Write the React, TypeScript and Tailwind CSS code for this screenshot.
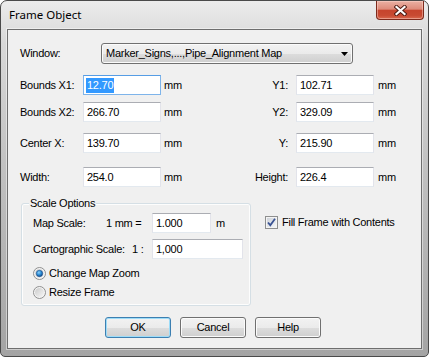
import type { ReactNode } from "react";

const btnGradient =
  "bg-[linear-gradient(to_bottom,#f2f2f2_0%,#ebebeb_50%,#dddddd_51%,#cfcfcf_100%)]";

function Field({
  value,
  width,
  focused = false,
  selected = false,
}: {
  value: string;
  width: string;
  focused?: boolean;
  selected?: boolean;
}) {
  return (
    <div
      className={`flex h-[20px] items-center border bg-white pl-[2px] ${width} ${
        focused
          ? "border-[#7eb4ea] border-t-[#569de5]"
          : "border-[#e2e3ea] border-t-[#abadb3] border-b-[#e3e9ef]"
      }`}
    >
      {selected ? (
        <span className="bg-[#3399ff] px-[1px] leading-[15px] text-white">{value}</span>
      ) : (
        <span className="pl-[1px]">{value}</span>
      )}
    </div>
  );
}

function CoordRow({
  left,
  leftValue,
  right,
  rightValue,
  focused = false,
  className = "",
}: {
  left: string;
  leftValue: string;
  right: string;
  rightValue: string;
  focused?: boolean;
  className?: string;
}) {
  return (
    <div className={`flex h-[20px] items-center pl-[12px] ${className}`}>
      <span className="w-[63px]">{left}</span>
      <Field value={leftValue} width="w-[78px]" focused={focused} selected={focused} />
      <div className="flex w-[135px] items-center justify-between pl-[3px] pr-[8px]">
        <span>mm</span>
        <span>{right}</span>
      </div>
      <Field value={rightValue} width="w-[78px]" />
      <span className="ml-[4px]">mm</span>
    </div>
  );
}

function Radio({ checked, children }: { checked?: boolean; children: ReactNode }) {
  return (
    <div className="flex h-[17px] items-center gap-[3px] pl-[11px]">
      <svg width="13" height="13" viewBox="0 0 13 13">
        <defs>
          <linearGradient id={checked ? "rg1" : "rg2"} x1="0" y1="0" x2="1" y2="1">
            <stop offset="0" stopColor="#cbcbcb" />
            <stop offset="1" stopColor="#f6f6f6" />
          </linearGradient>
          <radialGradient id="rdot" cx="0.4" cy="0.35" r="0.7">
            <stop offset="0" stopColor="#8fd0f8" />
            <stop offset="0.5" stopColor="#2c8fd8" />
            <stop offset="1" stopColor="#10407e" />
          </radialGradient>
        </defs>
        <circle cx="6.5" cy="6.5" r="6" fill="#f4f4f4" stroke="#8f8f8f" />
        <circle cx="6.5" cy="6.5" r="4.5" fill={`url(#${checked ? "rg1" : "rg2"})`} />
        {checked && <circle cx="6.5" cy="6.5" r="3.2" fill="url(#rdot)" stroke="#1c4f8c" strokeWidth="0.6" />}
      </svg>
      <span>{children}</span>
    </div>
  );
}

function Button({ children, focused = false }: { children: ReactNode; focused?: boolean }) {
  return (
    <button
      className={`flex h-[21px] w-[66px] items-center justify-center rounded-[3px] border ${btnGradient} ${
        focused
          ? "border-[#3c7fb1] shadow-[inset_0_0_0_1px_#9ddcf8]"
          : "border-[#707070] shadow-[inset_0_0_0_1px_#fbfbfb]"
      }`}
    >
      {children}
    </button>
  );
}

export default function App() {
  return (
    <div className="h-[357px] w-[429px] bg-white font-['Liberation_Sans',Arial,sans-serif] text-[11px] tracking-[-0.25px] text-black">
      <div className="flex h-[357px] w-[429px] flex-col rounded-t-[7px] rounded-b-[5px] border border-[#4a4a4a] bg-[linear-gradient(to_bottom,#ececec_0%,#d8d8d8_12%,#c2c2c2_45%,#a4a4a4_100%)]">
        <div className="flex h-[28px] items-start justify-between">
          <span className="pl-[8px] pt-[6px] font-['Noto_Sans',Arial,sans-serif] text-[11.5px] leading-[16px] tracking-normal">
            Frame Object
          </span>
          <div className="mr-[4px] flex h-[19px] w-[48px] items-center justify-center rounded-b-[4px] border border-t-0 border-[#7d2a1c] bg-[linear-gradient(to_bottom,#eab0a3_0%,#dd8b7a_45%,#c6442d_52%,#c84a32_80%,#d9694f_100%)] shadow-[inset_0_0_0_1px_rgba(255,220,210,0.45)]">
            <svg width="13" height="11" viewBox="0 0 13 11">
              <path d="M2.5 2 L10.5 9 M10.5 2 L2.5 9" stroke="#4b1a12" strokeWidth="4" strokeLinecap="square" />
              <path d="M2.5 2 L10.5 9 M10.5 2 L2.5 9" stroke="#ffffff" strokeWidth="2.2" strokeLinecap="square" />
            </svg>
          </div>
        </div>

        <div className="px-[6px]">
          <div className="h-[320px] border border-[#6e6e6e] bg-[#f0f0f0] shadow-[0_0_0_1px_rgba(255,255,255,0.45)]">
            <div className="mt-[13px] flex h-[21px] items-center pl-[12px]">
              <span className="w-[81px]">Window:</span>
              <div
                className={`flex h-[21px] w-[252px] items-center justify-between rounded-[3px] border border-[#707070] ${btnGradient} pl-[4px] pr-[4px] shadow-[inset_0_0_0_1px_#fbfbfb]`}
              >
                <span>Marker_Signs,...,Pipe_Alignment Map</span>
                <svg width="7" height="4" viewBox="0 0 7 4">
                  <path d="M0 0h7L3.5 4z" fill="#000" />
                </svg>
              </div>
            </div>

            <CoordRow className="mt-[11px]" left="Bounds X1:" leftValue="12.70" right="Y1:" rightValue="102.71" focused />
            <CoordRow className="mt-[7px]" left="Bounds X2:" leftValue="266.70" right="Y2:" rightValue="329.09" />
            <CoordRow className="mt-[11px]" left="Center X:" leftValue="139.70" right="Y:" rightValue="215.90" />
            <CoordRow className="mt-[14px]" left="Width:" leftValue="254.0" right="Height:" rightValue="226.4" />

            <div className="mt-[16px] flex items-start">
              <div className="relative ml-[13px] h-[103px] w-[230px] rounded-[3px] border border-[#d5dfe5] shadow-[inset_0_0_0_1px_#fdfdfd]">
                <span className="absolute -top-[8px] left-[7px] bg-[#f0f0f0] px-[1px] leading-[14px]">
                  Scale Options
                </span>
                <div className="mt-[9px] flex h-[20px] items-center pl-[11px]">
                  <span className="w-[73px]">Map Scale:</span>
                  <span className="w-[46px]">1 mm =</span>
                  <Field value="1.000" width="w-[59px]" />
                  <span className="ml-[5px]">m</span>
                </div>
                <div className="mt-[6px] flex h-[20px] items-center pl-[11px]">
                  <span className="w-[99px]">Cartographic Scale:</span>
                  <span className="w-[20px]">1 :</span>
                  <Field value="1,000" width="w-[91px]" />
                </div>
                <div className="mt-[6px] flex flex-col gap-[2px]">
                  <Radio checked>Change Map Zoom</Radio>
                  <Radio>Resize Frame</Radio>
                </div>
              </div>

              <div className="ml-[14px] mt-[13px] flex h-[13px] items-center gap-[4px]">
                <svg width="13" height="13" viewBox="0 0 13 13">
                  <defs>
                    <linearGradient id="cb" x1="0" y1="0" x2="1" y2="1">
                      <stop offset="0" stopColor="#cfd3da" />
                      <stop offset="1" stopColor="#f4f6f8" />
                    </linearGradient>
                  </defs>
                  <rect x="0.5" y="0.5" width="12" height="12" fill="#f4f4f4" stroke="#8e8f8f" />
                  <rect x="2" y="2" width="9" height="9" fill="url(#cb)" />
                  <path d="M3 6.5 L5.3 9.2 L10 2.8" fill="none" stroke="#3a5393" strokeWidth="1.8" />
                </svg>
                <span>Fill Frame with Contents</span>
              </div>
            </div>

            <div className="mt-[11px] flex gap-[9px] pl-[97px]">
              <Button focused>OK</Button>
              <Button>Cancel</Button>
              <Button>Help</Button>
            </div>
          </div>
        </div>
      </div>
    </div>
  );
}
